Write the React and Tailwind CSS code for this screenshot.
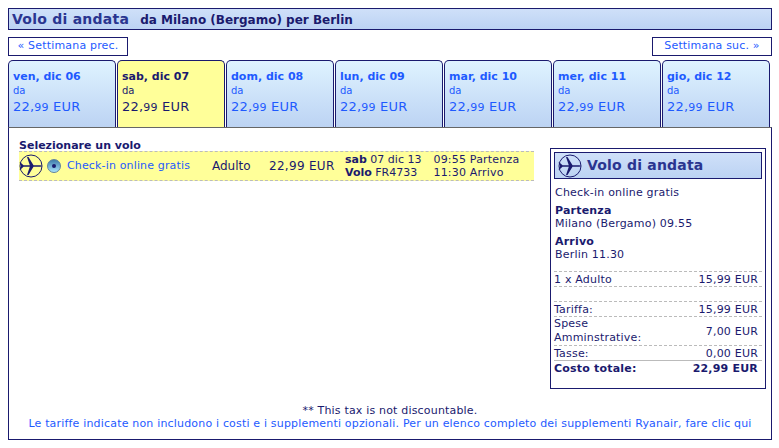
import React from "react";

const days = [
  { label: "ven, dic 06" },
  { label: "sab, dic 07", active: true },
  { label: "dom, dic 08" },
  { label: "lun, dic 09" },
  { label: "mar, dic 10" },
  { label: "mer, dic 11" },
  { label: "gio, dic 12" },
];

const PlaneIcon = () => (
  <svg width="24" height="24" viewBox="0 0 24 24" className="shrink-0">
    <circle cx="12" cy="12" r="11" fill="none" stroke="#1a1a6e" strokeWidth="1" />
    <path
      d="M0.5 8.5 L1.5 8.5 L4.5 11.2 L10.8 11.2 L8 3 L9.5 3 L14.5 11.2 L20 11.2 C22 11.2 23 11.7 23 12 C23 12.3 22 12.8 20 12.8 L14.5 12.8 L9.5 21 L8 21 L10.8 12.8 L4.5 12.8 L1.5 15.5 L0.5 15.5 L2 12 Z"
      fill="#1a1a6e"
    />
  </svg>
);

const Tab = ({ day }) => (
  <div
    className={`w-[108px] h-[67px] shrink-0 rounded-t-[5px] border-x border-t border-[#1a1a6e] pl-[4px] pt-[9px] ${
      day.active
        ? "bg-[#ffff99] text-[#1a1a6e]"
        : "bg-gradient-to-b from-[#dff3ff] to-[#bcd3f3] text-[#1e5aff]"
    }`}
  >
    <div className="text-[11px] leading-[14px] font-bold">{day.label}</div>
    <div className="text-[10px] leading-[12px] mt-[1px]">da</div>
    <div className="text-[13px] leading-[16px] mt-[2px] whitespace-nowrap tracking-[0.2px]">
      22,<span className="text-[11px]">99</span> EUR
    </div>
  </div>
);

const Row = ({ left, right, className = "" }) => (
  <div className={`flex justify-between items-center pr-[4px] ${className}`}>
    <span>{left}</span>
    <span className="whitespace-nowrap">{right}</span>
  </div>
);

export default function App() {
  return (
    <div
      className="w-[779px] h-[448px] overflow-hidden bg-white pt-[8px] pl-[8px] text-[11px] text-[#1a1a6e]"
      style={{ fontFamily: '"DejaVu Sans", Verdana, sans-serif' }}
    >
      <div className="w-[764px]">
        <div className="h-[22px] border border-[#1a1a6e] bg-gradient-to-b from-[#cfe0f9] to-[#bcd3f3] pl-[3px] pt-[1px] flex items-center whitespace-nowrap font-bold">
          <span className="text-[14px] tracking-[0.25px] text-[#2a3590]">Volo di andata</span>
          <span className="text-[12px] ml-[11px]">da Milano (Bergamo) per Berlin</span>
        </div>

        <div className="flex justify-between mt-[7px] mb-[4px] text-[11px] tracking-[0.18px] text-[#1e5aff]">
          <div className="w-[120px] h-[19px] border border-[#1a1a6e] flex items-center justify-center">« Settimana prec.</div>
          <div className="w-[120px] h-[19px] border border-[#1a1a6e] flex items-center justify-center">Settimana suc. »</div>
        </div>

        <div className="flex gap-[1px]">
          {days.map((d) => (
            <Tab key={d.label} day={d} />
          ))}
        </div>

        <div className="h-[313px] border border-[#1a1a6e] border-t-[#666666] flex flex-col">
          <div className="flex flex-1 pl-[10px] pr-[5px] pt-[20px]">
            <div className="w-[515px]">
              <div className="font-bold text-[11px] leading-[13px] -mt-[9px] mb-[-1px]">Selezionare un volo</div>
              <div className="h-[30px] bg-[#ffff99] border-y border-dashed border-[#bbbbbb] flex items-center text-[11px] whitespace-nowrap">
                <PlaneIcon />
                <span className="ml-[4px] -mt-[1px] w-[14px] h-[14px] rounded-full bg-gradient-to-b from-[#3f7cab] to-[#a8e4fb] border border-[#5f829e] flex items-center justify-center shrink-0">
                  <span className="w-[4px] h-[4px] rounded-full bg-[#1a1a6e]"></span>
                </span>
                <span className="ml-[6px] w-[145px] tracking-[0.15px] text-[#1e5aff]">Check-in online gratis</span>
                <span className="w-[57px] text-[12px]">Adulto</span>
                <span className="w-[76px] text-[12px] tracking-[0.3px]">22,99 EUR</span>
                <div className="leading-[13px]">
                  <div>
                    <b>sab</b> 07 dic 13
                  </div>
                  <div>
                    <b>Volo</b> FR4733
                  </div>
                </div>
                <div className="leading-[13px] ml-[12px] tracking-[0.2px]">
                  <div>09:55 Partenza</div>
                  <div>11:30 Arrivo</div>
                </div>
              </div>
            </div>

            <div className="ml-[16px] w-[216px] h-[241px] border border-[#1a1a6e] p-[3px] text-[11px] leading-[13px] tracking-[0.2px]">
              <div className="h-[27px] border border-[#1a1a6e] bg-gradient-to-b from-[#cfe0f9] to-[#bcd3f3] flex items-center pl-[3px] gap-[5px]">
                <PlaneIcon />
                <span className="font-bold text-[14px] text-[#2a3590]">Volo di andata</span>
              </div>
              <div className="mt-[7px] px-[1px]">Check-in online gratis</div>
              <div className="mt-[5px] px-[1px] font-bold">Partenza</div>
              <div className="px-[1px]">Milano (Bergamo) 09.55</div>
              <div className="mt-[5px] px-[1px] font-bold">Arrivo</div>
              <div className="px-[1px]">Berlin 11.30</div>

              <Row
                left="1 x Adulto"
                right="15,99 EUR"
                className="mt-[10px] h-[16px] border-t border-b border-dashed border-[#bbbbbb]"
              />
              <div className="h-[14px]"></div>
              <Row left="Tariffa:" right="15,99 EUR" className="h-[16px] border-t border-b border-dashed border-[#bbbbbb]" />
              <Row
                left={
                  <span className="block leading-[14px]">
                    Spese
                    <br />
                    Amminstrative:
                  </span>
                }
                right="7,00 EUR"
                className="h-[29px] border-b border-dashed border-[#bbbbbb]"
              />
              <Row left="Tasse:" right="0,00 EUR" className="h-[15px] border-b border-[#bbbbbb]" />
              <Row left="Costo totale:" right="22,99 EUR" className="h-[15px] font-bold" />
            </div>
          </div>

          <div className="text-center leading-[13px] pb-[9px] text-[11px] tracking-[0.18px]">
            <div>** This tax is not discountable.</div>
            <div className="text-[#1e5aff] whitespace-nowrap">
              Le tariffe indicate non includono i costi e i supplementi opzionali. Per un elenco completo dei supplementi Ryanair, fare clic qui
            </div>
          </div>
        </div>
      </div>
    </div>
  );
}
